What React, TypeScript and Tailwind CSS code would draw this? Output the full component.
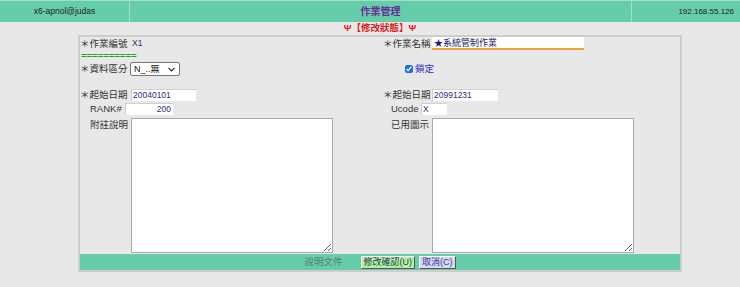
import React from 'react';

const font = { fontFamily: '"Liberation Sans", "Noto Sans CJK TC", sans-serif' };

function Label({ children, className }: { children: React.ReactNode; className: string }) {
  return <span className={`shrink-0 text-[9.5px] leading-none text-[#333] ${className}`}>{children}</span>;
}

function Field({ value, className }: { value: string; className: string }) {
  return (
    <input
      readOnly
      value={value}
      className={`h-[12px] bg-white px-[2px] text-[8.5px] leading-none text-[#2e2e80] outline-none shadow-[inset_1px_1px_0_#d0d0d0] ${className}`}
    />
  );
}

export default function App() {
  return (
    <div className="min-h-[287px] w-[740px] bg-[#e8e8e8]" style={font}>
      {/* top bar */}
      <div className="flex h-[22px] border-t border-[#9fe0c8] bg-[#66cdaa]">
        <div className="flex w-[130px] items-center justify-center border-r border-[#9fe0c8] text-[8.5px] text-[#222]">
          x6-apnol@judas
        </div>
        <div className="flex w-[502px] items-center justify-center border-r border-[#9fe0c8] text-[10px] font-bold text-[#6a2a96]">
          作業管理
        </div>
        <div className="flex flex-1 items-center justify-end pr-[6px] text-[8px] text-[#222]">192.168.55.126</div>
      </div>

      <div className="flex h-[13px] items-center justify-center pl-[20px] text-[9.5px] font-bold text-[#e01818]">
        Ψ【修改狀態】Ψ
      </div>

      {/* form panel */}
      <div className="ml-[78px] w-[604px] border-2 border-[#cdcdcd]">
        <div className="grid h-[13px] grid-cols-2">
          <div className="flex items-center">
            <Label className="w-[52px]">＊作業編號</Label>
            <span className="text-[8.5px] text-[#2e2e80]">X1</span>
          </div>
          <div className="flex items-center pl-[3px]">
            <Label className="w-[49px]">＊作業名稱</Label>
            <input
              readOnly
              value="★系統管制作業"
              className="h-[13px] w-[152px] border-b-2 border-[#eea336] bg-white px-[2px] text-[9px] leading-none text-[#1c1c6a] outline-none"
            />
          </div>
        </div>

        <div className="flex h-[12px] items-center pl-[1px] text-[9.5px] font-bold leading-none text-[#22a022]">
          ==========
        </div>

        <div className="grid h-[14px] grid-cols-2">
          <div className="flex items-center">
            <Label className="w-[50px]">＊資料區分</Label>
            <div className="relative">
              <select className="block h-[14px] w-[50px] appearance-none rounded-[2px] border border-[#767676] bg-white pl-[3px] text-[9px] leading-none text-[#111] outline-none">
                <option>N_..無</option>
              </select>
              <svg
                className="pointer-events-none absolute right-[5px] top-[5px]"
                width="7"
                height="5"
                viewBox="0 0 7 5"
                fill="none"
                stroke="#222"
                strokeWidth="1.2"
              >
                <path d="M0.5 0.8 L3.5 3.8 L6.5 0.8" />
              </svg>
            </div>
          </div>
          <div className="flex items-center pl-[25px]">
            <input type="checkbox" readOnly checked className="m-0 h-[8px] w-[8px] accent-[#1a6ee0]" />
            <span className="ml-[2px] text-[9.5px] text-[#2f2fc0]">鎖定</span>
          </div>
        </div>

        <div className="h-[13px]" />

        <div className="grid h-[12px] grid-cols-2">
          <div className="flex items-center">
            <Label className="w-[51px]">＊起始日期</Label>
            <Field value="20040101" className="w-[65px]" />
          </div>
          <div className="flex items-center pl-[3px]">
            <Label className="w-[49px]">＊起始日期</Label>
            <Field value="20991231" className="w-[66px]" />
          </div>
        </div>

        <div className="mt-[2px] grid h-[12px] grid-cols-2">
          <div className="flex items-center pl-[10px]">
            <Label className="w-[35px]">RANK#</Label>
            <Field value="200" className="w-[48px] text-right" />
          </div>
          <div className="flex items-center pl-[11px]">
            <Label className="w-[30px]">Ucode</Label>
            <Field value="X" className="w-[26px]" />
          </div>
        </div>

        <div className="mt-[3px] grid h-[135px] grid-cols-2">
          <div className="flex items-start pl-[10px]">
            <Label className="mt-[2px] w-[41px]">附註說明</Label>
            <textarea readOnly className="h-[135px] w-[202px] border border-[#a9a9a9] bg-white outline-none" />
          </div>
          <div className="flex items-start pl-[11px]">
            <Label className="mt-[2px] w-[41px]">已用圖示</Label>
            <textarea readOnly className="h-[135px] w-[202px] border border-[#a9a9a9] bg-white outline-none" />
          </div>
        </div>

        <div className="mt-[1px] flex h-[16px] items-center justify-center bg-[#66cdaa]">
          <span className="mr-[18px] text-[9.5px] text-[#5d7a7a]">說明文件</span>
          <button className="h-[13px] border border-b-[#555] border-l-white border-r-[#555] border-t-white bg-[#b2f0a2] px-[2px] text-[9px] leading-none text-[#2b3a55]">
            修改確認(U)
          </button>
          <button className="ml-[4px] h-[13px] border border-b-[#555] border-l-white border-r-[#555] border-t-white bg-[#d9d9ee] px-[2px] text-[9px] leading-none text-[#3535a8]">
            取消(C)
          </button>
        </div>
      </div>
    </div>
  );
}
